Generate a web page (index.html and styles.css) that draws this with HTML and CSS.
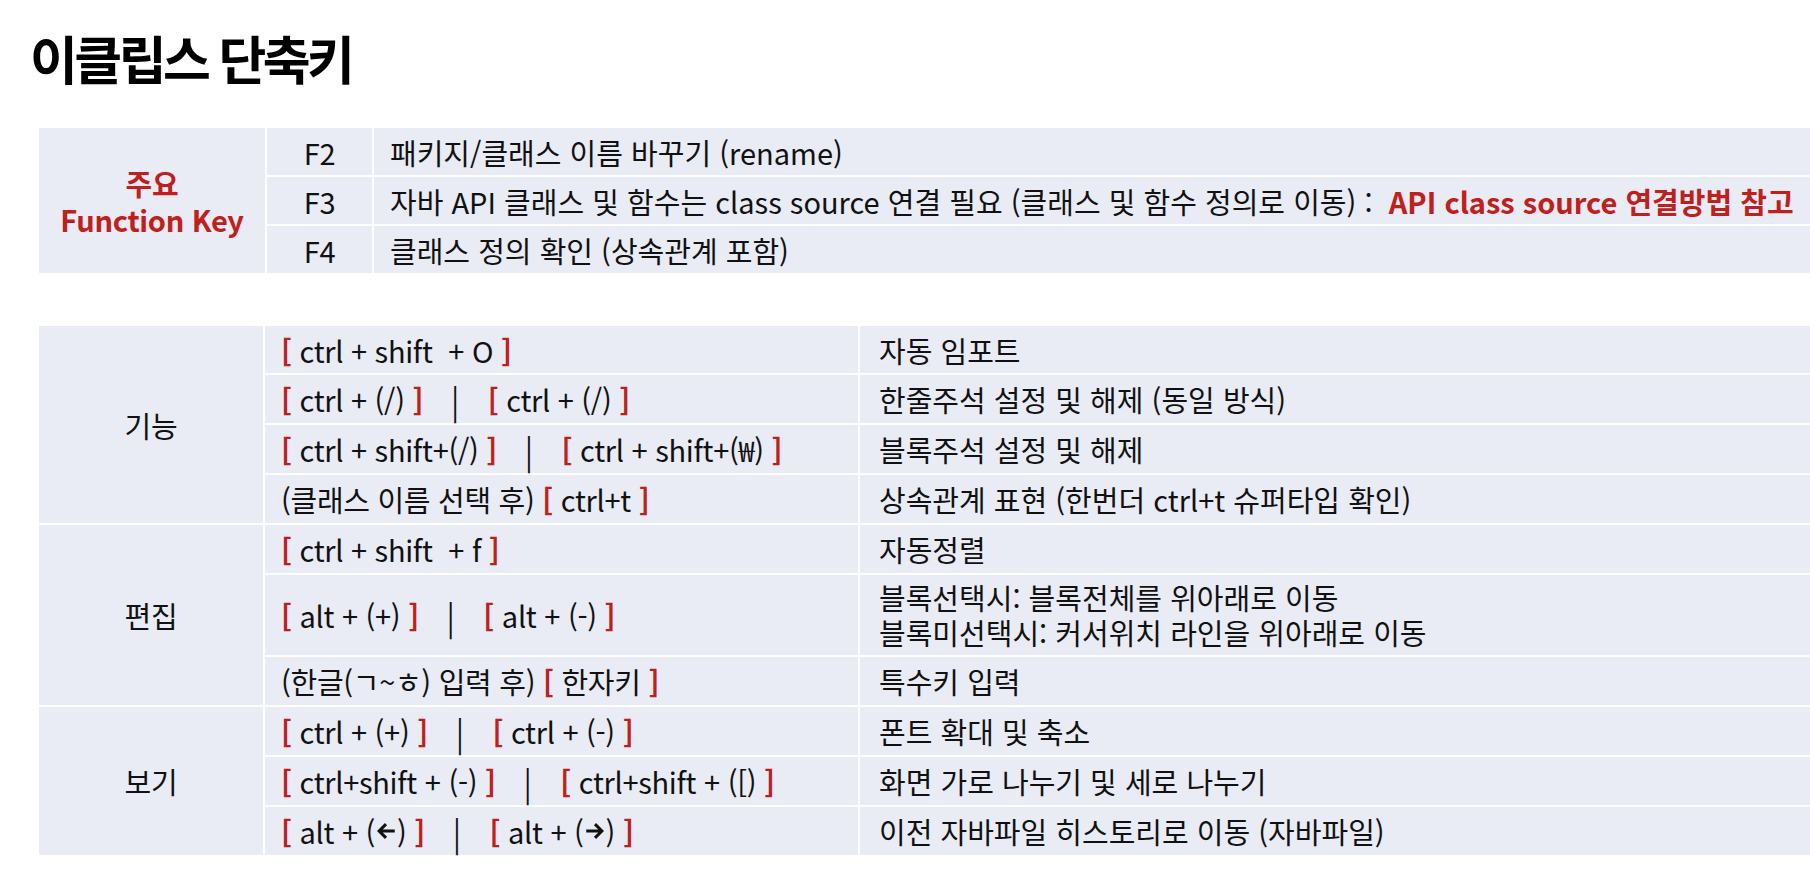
FILE: index.html
```html
<!DOCTYPE html>
<html lang="ko">
<head>
<meta charset="utf-8">
<title>이클립스 단축키</title>
<link rel="stylesheet" href="styles.css">
</head>
<body>
<div class="page">
  <h1 class="title">이클립스 단축키</h1>

  <div class="tbl tbl-fn">
    <div class="cell head span3"><span class="red b">주요<br>Function Key</span></div>
    <div class="cell key">F2</div>
    <div class="cell desc">패키지/클래스 이름 바꾸기 (rename)</div>
    <div class="cell key">F3</div>
    <div class="cell desc">자바 API 클래스 및 함수는 class source 연결 필요 (클래스 및 함수 정의로 이동) :&nbsp; <span class="red b">API class source 연결방법 참고</span></div>
    <div class="cell key">F4</div>
    <div class="cell desc">클래스 정의 확인 (상속관계 포함)</div>
  </div>

  <div class="tbl tbl-keys">
    <div class="cell head g1">기능</div>
    <div class="cell sc"><span class="br">[</span> ctrl + shift  + O <span class="br">]</span></div>
    <div class="cell desc">자동 임포트</div>
    <div class="cell sc"><span class="br">[</span> ctrl + (/) <span class="br">]</span><span class="sep">|</span><span class="br">[</span> ctrl + (/) <span class="br">]</span></div>
    <div class="cell desc">한줄주석 설정 및 해제 (동일 방식)</div>
    <div class="cell sc"><span class="br">[</span> ctrl + shift+(/) <span class="br">]</span><span class="sep">|</span><span class="br">[</span> ctrl + shift+(₩) <span class="br">]</span></div>
    <div class="cell desc">블록주석 설정 및 해제</div>
    <div class="cell sc">(클래스 이름 선택 후) <span class="br">[</span> ctrl+t <span class="br">]</span></div>
    <div class="cell desc">상속관계 표현 (한번더 ctrl+t 슈퍼타입 확인)</div>

    <div class="cell head g2">편집</div>
    <div class="cell sc"><span class="br">[</span> ctrl + shift  + f <span class="br">]</span></div>
    <div class="cell desc">자동정렬</div>
    <div class="cell sc"><span class="br">[</span> alt + (+) <span class="br">]</span><span class="sep">|</span><span class="br">[</span> alt + (-) <span class="br">]</span></div>
    <div class="cell desc two">블록선택시: 블록전체를 위아래로 이동<br>블록미선택시: 커서위치 라인을 위아래로 이동</div>
    <div class="cell sc">(한글(ㄱ~ㅎ) 입력 후) <span class="br">[</span> 한자키 <span class="br">]</span></div>
    <div class="cell desc">특수키 입력</div>

    <div class="cell head g3">보기</div>
    <div class="cell sc"><span class="br">[</span> ctrl + (+) <span class="br">]</span><span class="sep">|</span><span class="br">[</span> ctrl + (-) <span class="br">]</span></div>
    <div class="cell desc">폰트 확대 및 축소</div>
    <div class="cell sc"><span class="br">[</span> ctrl+shift + (-) <span class="br">]</span><span class="sep">|</span><span class="br">[</span> ctrl+shift + ([) <span class="br">]</span></div>
    <div class="cell desc">화면 가로 나누기 및 세로 나누기</div>
    <div class="cell sc"><span class="br">[</span> alt + (<svg class="arr" viewBox="0 0 16 16" aria-hidden="true"><path d="M15 8H2.5M8 2.5L2.5 8L8 13.5"/></svg>) <span class="br">]</span><span class="sep">|</span><span class="br">[</span> alt + (<svg class="arr" viewBox="0 0 16 16" aria-hidden="true"><path d="M1 8H13.5M8 2.5L13.5 8L8 13.5"/></svg>) <span class="br">]</span></div>
    <div class="cell desc">이전 자바파일 히스토리로 이동 (자바파일)</div>
  </div>
</div>
</body>
</html>
```

FILE: styles.css
```css
html, body {
  margin: 0;
  padding: 0;
  background: #ffffff;
}

body {
  font-family: "Noto Sans CJK KR", "Noto Sans", sans-serif;
  color: #111111;
  overflow: hidden;
}

.page {
  width: 1810px;
  height: 888px;
  padding: 0 0 0 39px;
  box-sizing: border-box;
}

.title {
  margin: 0 0 0 -9px;
  padding-top: 26px;
  height: 128px;
  box-sizing: border-box;
  font-size: 52px;
  font-weight: 700;
  letter-spacing: -3.5px;
  line-height: 64px;
  color: #000000;
}

.tbl {
  display: grid;
  gap: 2px;
  background: #ffffff;
  font-size: 29px;
  letter-spacing: -0.3px;
}

.tbl-fn {
  grid-template-columns: 226px 105px 1fr;
  grid-template-rows: repeat(3, 47px);
}

.tbl-keys {
  margin-top: 53px;
  grid-template-columns: 224px 593px 1fr;
  grid-template-rows: 47px 48px 48px 48px 48px 80px 48px 48px 48px 48px;
}

.cell {
  background: #e9ebf5;
  display: flex;
  align-items: center;
  white-space: pre;
  line-height: 36px;
}

.head {
  justify-content: center;
  text-align: center;
}

.span3 { grid-row: 1 / span 3; }
.g1 { grid-row: 1 / span 4; }
.g2 { grid-row: 5 / span 3; }
.g3 { grid-row: 8 / span 3; }

.key {
  justify-content: center;
}

.desc {
  padding-left: 16px;
  letter-spacing: 0;
}

.tbl-keys .desc {
  padding-left: 19px;
}

.sc {
  padding-left: 16px;
}

.sep {
  margin: 0 29px 0 28px;
  transform: scaleY(1.15);
  display: inline-block;
}

.two {
  line-height: 35px;
}

.red {
  color: #c0201c;
}

.b {
  font-weight: 700;
}

.br {
  color: #c0201c;
  font-weight: 700;
}

.arr {
  width: 20px;
  height: 20px;
  margin: 0 1px;
  vertical-align: -3px;
  fill: none;
  stroke: #111111;
  stroke-width: 2.4;
  stroke-linecap: butt;
  stroke-linejoin: miter;
}
```
